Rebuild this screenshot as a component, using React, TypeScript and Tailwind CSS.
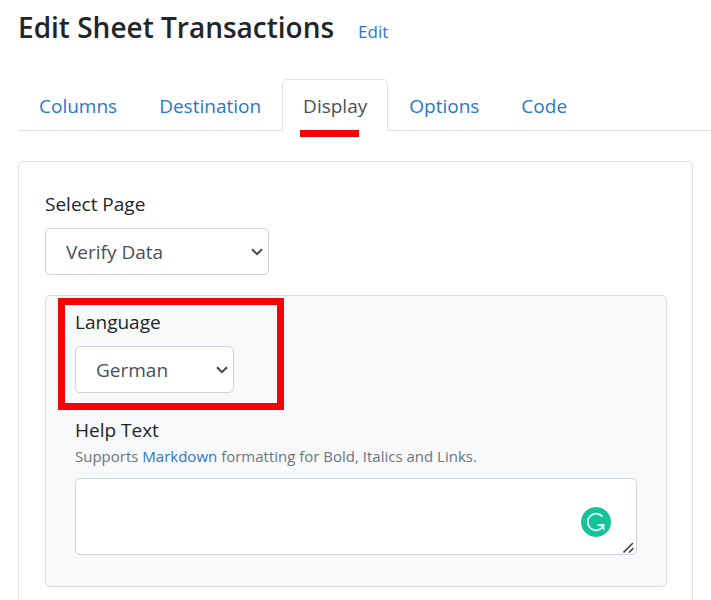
import React from "react";

const tabs = ["Columns", "Destination", "Display", "Options", "Code"];

type SelectFieldProps = {
  id: string;
  label: string;
  options: string[];
  className: string;
};

function SelectField({ id, label, options, className }: SelectFieldProps) {
  return (
    <div>
      <label htmlFor={id} className="block leading-7">
        {label}
      </label>
      <div className={`relative mt-2.5 h-[47px] ${className}`}>
        <select
          id={id}
          className="block h-full w-full appearance-none rounded-[5px] border border-[#ced4da] bg-white pt-0.5 pr-8 pl-5 text-[#495057]"
        >
          {options.map((option) => (
            <option key={option}>{option}</option>
          ))}
        </select>
        <svg
          className="pointer-events-none absolute top-5 right-1.5 h-2 w-3"
          viewBox="0 0 12 8"
          fill="none"
          stroke="#42474c"
          strokeWidth="2"
          aria-hidden="true"
        >
          <path d="M1 1.2 6 6.2 11 1.2" />
        </svg>
      </div>
    </div>
  );
}

export default function App() {
  return (
    <main className="h-screen overflow-hidden bg-white pl-[18px] font-['Open_Sans','Noto_Sans',sans-serif] text-[19px] text-[#212529]">
      <header className="flex items-baseline gap-6 pt-[7px]">
        <h1 className="text-[28px] leading-10 font-semibold">Edit Sheet Transactions</h1>
        <a href="#edit" className="text-[17px] leading-6 text-[#2878cc]">
          Edit
        </a>
      </header>

      <nav className="mt-8 flex border-b border-[#dee2e6]">
        {tabs.map((tab) =>
          tab === "Display" ? (
            <a
              key={tab}
              href="#display"
              aria-current="page"
              className="relative -mb-px rounded-t-[5px] border border-[#dee2e6] border-b-white bg-white px-5 pt-3 pb-2.5 leading-7 text-[#495057]"
            >
              {tab}
              <span className="absolute -bottom-[7px] left-[17px] h-[7px] w-[59px] bg-[#f40404]" />
            </a>
          ) : (
            <a
              key={tab}
              href={`#${tab.toLowerCase()}`}
              className="-mb-px border border-transparent px-5 pt-3 pb-2.5 leading-7 text-[#2878cc]"
            >
              {tab}
            </a>
          ),
        )}
      </nav>

      <section className="mt-[30px] mr-[18px] rounded-[5px] border border-[#dfe0e2] pt-7 pr-[25px] pb-[26px] pl-[26px]">
        <SelectField
          id="page"
          label="Select Page"
          options={["Verify Data", "Upload", "Match Columns"]}
          className="w-56"
        />

        <div className="relative mt-5 rounded-[5px] border border-[#d9dcdf] bg-[#f8f9fb] px-[29px] pt-3 pb-[31px]">
          <div className="absolute top-0.5 left-3 h-[112px] w-[226px] border-7 border-[#f40404]" />
          <SelectField
            id="language"
            label="Language"
            options={["German", "English", "French"]}
            className="w-[159px]"
          />

          <label htmlFor="help" className="mt-[23px] block leading-7">
            Help Text
          </label>
          <p className="text-[15px] leading-6 text-[#6c757d]">
            Supports{" "}
            <a href="#markdown" className="text-[#2878cc]">
              Markdown
            </a>{" "}
            formatting for Bold, Italics and Links.
          </p>
          <div className="relative mt-2.5">
            <textarea
              id="help"
              className="block h-[77px] w-full resize-none rounded-[5px] border border-[#ced4da] bg-white px-5 py-2"
            />
            <svg
              className="absolute right-[26px] bottom-[18px] size-[30px]"
              viewBox="0 0 30 30"
              fill="none"
              aria-hidden="true"
            >
              <circle cx="15" cy="15" r="15" fill="#15c39a" />
              <path
                d="M21.5 9.8A8.3 8.3 0 1 0 20.6 21.2L22.4 18.2H16.4"
                stroke="#e6fff8"
                strokeWidth="1.8"
              />
              <path d="M18.6 17.3H23.3V24.2Z" fill="#e6fff8" />
            </svg>
            <svg
              className="pointer-events-none absolute right-[3px] bottom-0.5 size-[11px]"
              viewBox="0 0 11 11"
              stroke="#444"
              strokeWidth="1.6"
              aria-hidden="true"
            >
              <path d="M.5 10.5 10 1M6 10.5 10.5 6" />
            </svg>
          </div>
        </div>
      </section>
    </main>
  );
}
